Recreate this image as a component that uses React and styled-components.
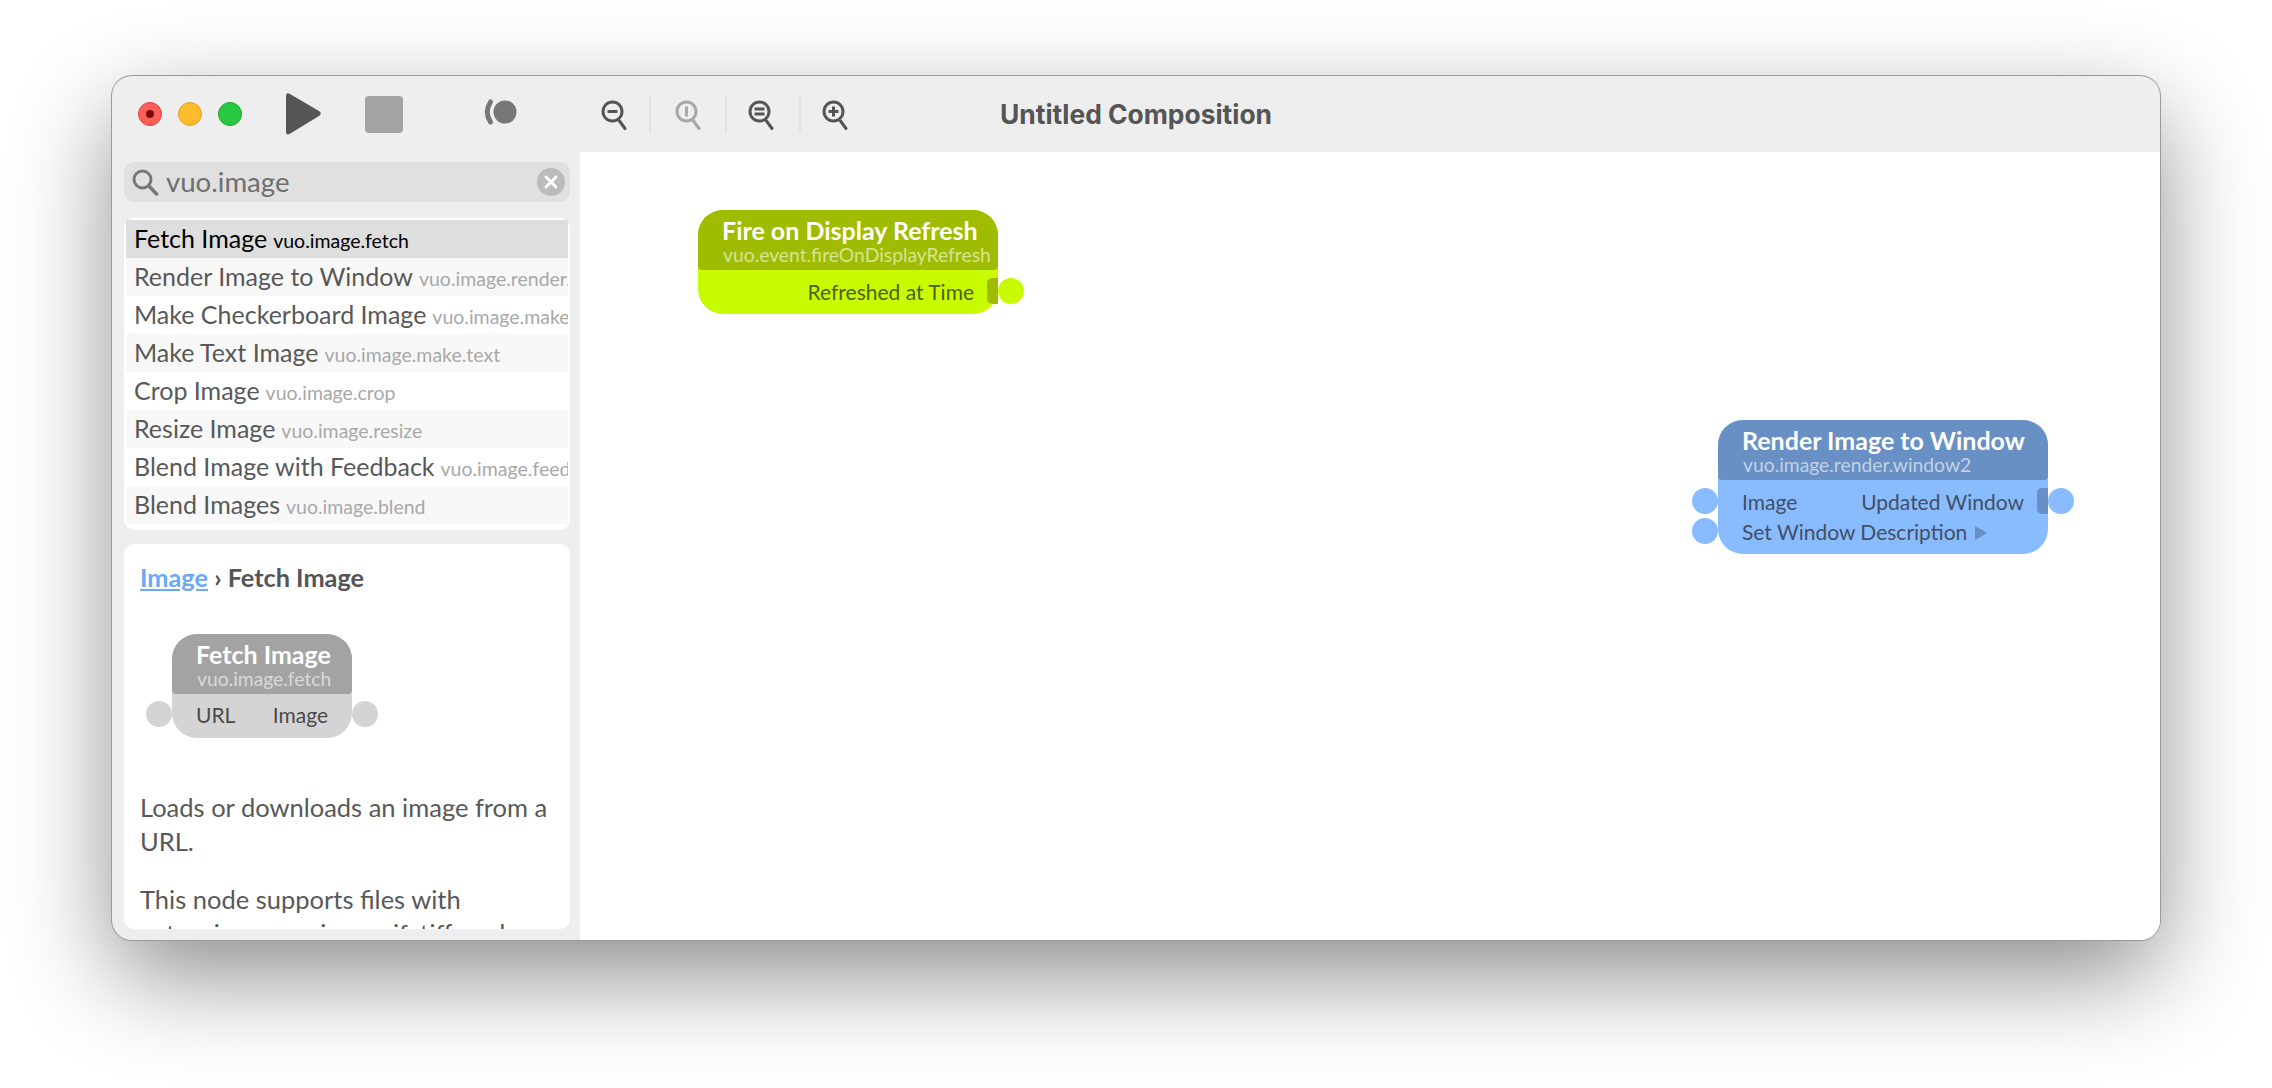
import styled, { createGlobalStyle } from "styled-components";

const GlobalStyle = createGlobalStyle`
  html, body { margin: 0; background: #fff; overflow: hidden; }
  body { font-family: "Lato", "Noto Sans", sans-serif; }
`;

const Page = styled.div`
  width: 2272px;
  height: 1088px;
  padding: 75px 0 0 111px;
  box-sizing: border-box;
  overflow: hidden;
`;

const Win = styled.div`
  width: 2050px;
  height: 866px;
  box-sizing: border-box;
  border: 1px solid rgba(0, 0, 0, 0.35);
  border-radius: 21px;
  background: #eeeeee;
  box-shadow: 0 36px 100px -4px rgba(0, 0, 0, 0.47);
  overflow: hidden;
  display: flex;
  flex-direction: column;
`;

const Toolbar = styled.div`
  height: 76px;
  flex: none;
  display: flex;
  align-items: center;
  position: relative;
  padding-left: 26px;
`;

const Lights = styled.div`
  display: flex;
  gap: 16px;
`;

const Light = styled.div`
  width: 24px;
  height: 24px;
  border-radius: 50%;
  box-sizing: border-box;
  background: ${(p) => p.$color};
  border: 1px solid ${(p) => p.$edge};
  display: flex;
  align-items: center;
  justify-content: center;
  &::after {
    content: "";
    width: 8px;
    height: 8px;
    border-radius: 50%;
    background: ${(p) => p.$dot || "transparent"};
  }
`;

const PlayIcon = styled.svg`
  margin-left: 42px;
  width: 38px;
  height: 44px;
  flex: none;
`;

const StopBtn = styled.div`
  margin-left: 43px;
  width: 38px;
  height: 37px;
  border-radius: 4px;
  background: #a3a3a3;
  flex: none;
`;

const ActivityIcon = styled.svg`
  margin-left: 81px;
  width: 33px;
  height: 26px;
  flex: none;
  margin-top: -4px;
`;

const ZoomGroup = styled.div`
  margin-left: 62px;
  display: flex;
  align-items: center;
`;

const ZoomBtn = styled.div`
  width: ${(p) => p.$w}px;
  height: 38px;
  display: flex;
  align-items: center;
  justify-content: center;
  border-right: ${(p) => (p.$sep ? "2px solid #e2e2e2" : "none")};
  box-sizing: border-box;
  padding-right: ${(p) => p.$nudge || 0}px;
`;

const Title = styled.div`
  margin-left: 131px;
  font-family: "Inter", sans-serif;
  font-size: 26.4px;
  font-weight: 700;
  color: #555;
  white-space: nowrap;
`;

const Body = styled.div`
  flex: 1;
  display: flex;
  min-height: 0;
`;

const Sidebar = styled.div`
  width: 468px;
  flex: none;
  box-sizing: border-box;
  padding: 10px 10px 11px 12px;
  display: flex;
  flex-direction: column;
`;

const Search = styled.div`
  height: 40px;
  flex: none;
  border-radius: 10px;
  background: #e0e0e0;
  display: flex;
  align-items: center;
  padding: 0 5px 0 7px;
`;

const SearchText = styled.div`
  margin-left: 7px;
  flex: 1;
  font-size: 27.6px;
  line-height: 36px;
  color: #6f6f6f;
`;

const ListPanel = styled.div`
  margin-top: 16px;
  height: 312px;
  flex: none;
  box-sizing: border-box;
  padding: 2px 2px 6px;
  background: #fff;
  border-radius: 10px;
`;

const Row = styled.div`
  height: 38px;
  padding-left: 8px;
  display: flex;
  align-items: baseline;
  gap: 6px;
  line-height: 36px;
  white-space: nowrap;
  overflow: hidden;
  background: ${(p) => (p.$selected ? "#dedede" : p.$odd ? "#f8f8f8" : "#fff")};
  color: ${(p) => (p.$selected ? "#000" : "#585858")};
`;

const RowName = styled.span`
  font-size: 25px;
`;

const RowId = styled.span`
  font-size: 19.5px;
  color: ${(p) => (p.$selected ? "#000" : "#a8a8a8")};
`;

const DetailPanel = styled.div`
  margin-top: 14px;
  flex: 1;
  min-height: 0;
  overflow: hidden;
  background: #fff;
  border-radius: 10px;
  padding: 17px 16px 0;
`;

const Crumbs = styled.div`
  font-size: 25.3px;
  font-weight: 700;
  color: #555;
  line-height: 32px;
`;

const CrumbLink = styled.span`
  color: #6aa9f4;
  text-decoration: underline;
`;

const Preview = styled.div`
  margin-top: 41px;
  margin-left: 32px;
  margin-bottom: 52px;
`;

const Para = styled.p`
  margin: 0 0 24px;
  font-size: 25.5px;
  line-height: 34px;
  color: #585858;
`;

const Canvas = styled.div`
  flex: 1;
  background: #fff;
  position: relative;
  overflow: hidden;
`;

const NodeBox = styled.div`
  position: ${(p) => (p.$x === undefined ? "relative" : "absolute")};
  left: ${(p) => p.$x}px;
  top: ${(p) => p.$y}px;
  width: ${(p) => p.$w}px;
  background: ${(p) => p.$body};
  color: ${(p) => p.$ink};
  border-radius: 25px;
  padding-bottom: ${(p) => p.$pad}px;
`;

const NodeHead = styled.div`
  height: 60px;
  box-sizing: border-box;
  background: ${(p) => p.$head};
  border-radius: 25px 25px 4px 4px;
  padding: 5px 0 0 24px;
  white-space: nowrap;
`;

const NodeTitle = styled.div`
  font-size: 25px;
  font-weight: 700;
  color: #fff;
  line-height: 30px;
`;

const NodeId = styled.div`
  font-size: 19.3px;
  color: rgba(255, 255, 255, 0.6);
  line-height: 20px;
  margin-left: 1px;
`;

const PortRow = styled.div`
  position: relative;
  height: 30px;
  margin-top: ${(p) => p.$top || 0}px;
  padding: 0 24px;
  display: flex;
  align-items: center;
  justify-content: space-between;
  font-size: 21px;
  white-space: nowrap;
`;

const PortDot = styled.div`
  position: absolute;
  top: 2px;
  width: 26px;
  height: 26px;
  border-radius: 50%;
  background: ${(p) => p.$body};
  ${(p) => (p.$side === "left" ? "left: -26px;" : "right: -26px;")}
`;

const PortPill = styled.div`
  position: absolute;
  right: 0;
  top: 2px;
  width: 11px;
  height: 26px;
  border-radius: 5px 0 0 5px;
  background: ${(p) => p.$head};
`;

const MoreArrow = styled.span`
  display: inline-block;
  margin-left: 8px;
  border-left: 12px solid ${(p) => p.$head};
  border-top: 7px solid transparent;
  border-bottom: 7px solid transparent;
`;

const Glass = ({ color = "#555", children }) => (
  <svg width="28" height="32" viewBox="0 0 28 32" fill="none">
    <circle cx="12.5" cy="13.5" r="9.5" stroke={color} strokeWidth="3" />
    <path d="M19.5 23 L25 30.5" stroke={color} strokeWidth="3" strokeLinecap="round" />
    {children}
  </svg>
);

const nodeRows = [
  ["Fetch Image", "vuo.image.fetch"],
  ["Render Image to Window", "vuo.image.render.window2"],
  ["Make Checkerboard Image", "vuo.image.make.checkerboard"],
  ["Make Text Image", "vuo.image.make.text"],
  ["Crop Image", "vuo.image.crop"],
  ["Resize Image", "vuo.image.resize"],
  ["Blend Image with Feedback", "vuo.image.feedback"],
  ["Blend Images", "vuo.image.blend"],
];

const grey = { $head: "#a3a3a3", $body: "#d4d4d4", $ink: "#4a4a4a" };
const lime = { $head: "#9fbc00", $body: "#c9fb00", $ink: "#4f5f10" };
const blue = { $head: "#6890c4", $body: "#88bbff", $ink: "#434f63" };

const App = () => {
  return (
    <Page>
      <GlobalStyle />
      <Win>
        <Toolbar>
          <Lights>
            <Light $color="#ff5f57" $edge="#e0443e" $dot="#7a0a05" />
            <Light $color="#febc2e" $edge="#dea123" />
            <Light $color="#28c840" $edge="#1aab29" />
          </Lights>
          <PlayIcon viewBox="0 0 38 44">
            <path
              d="M2 4 Q2 0 5.5 1.8 L35 19 Q38.5 21.5 35 24 L5.5 42 Q2 43.5 2 40 Z"
              fill="#555"
            />
          </PlayIcon>
          <StopBtn />
          <ActivityIcon viewBox="0 0 33 26">
            <circle cx="21" cy="13" r="11.5" fill="#777" />
            <path d="M6.5 3 Q0 13 6.5 23" stroke="#777" strokeWidth="5" fill="none" strokeLinecap="round" />
          </ActivityIcon>
          <ZoomGroup>
            <ZoomBtn $w={72} $sep>
              <Glass>
                <path d="M7.5 13.5 H17.5" stroke="#555" strokeWidth="3" />
              </Glass>
            </ZoomBtn>
            <ZoomBtn $w={76} $sep>
              <Glass color="#a8a8a8">
                <path d="M12.5 8.5 V18.5" stroke="#a8a8a8" strokeWidth="3" />
              </Glass>
            </ZoomBtn>
            <ZoomBtn $w={74} $sep $nudge={4}>
              <Glass>
                <path d="M7.5 11 H17.5 M7.5 16 H17.5" stroke="#555" strokeWidth="3" />
              </Glass>
            </ZoomBtn>
            <ZoomBtn $w={68}>
              <Glass>
                <path d="M7.5 13.5 H17.5 M12.5 8.5 V18.5" stroke="#555" strokeWidth="3" />
              </Glass>
            </ZoomBtn>
          </ZoomGroup>
          <Title>Untitled Composition</Title>
        </Toolbar>
        <Body>
          <Sidebar>
            <Search>
              <svg width="28" height="28" viewBox="0 0 28 28" fill="none">
                <circle cx="11.5" cy="11.5" r="8.5" stroke="#777" strokeWidth="3" />
                <path d="M18 18 L25.5 26" stroke="#777" strokeWidth="3.5" strokeLinecap="round" />
              </svg>
              <SearchText>vuo.image</SearchText>
              <svg width="28" height="28" viewBox="0 0 28 28">
                <circle cx="14" cy="14" r="14" fill="#bbb" />
                <path d="M9 9 L19 19 M19 9 L9 19" stroke="#fff" strokeWidth="3" strokeLinecap="round" />
              </svg>
            </Search>
            <ListPanel>
              {nodeRows.map(([name, id], i) => (
                <Row key={id} $selected={i === 0} $odd={i % 2 === 1}>
                  <RowName>{name}</RowName>
                  <RowId $selected={i === 0}>{id}</RowId>
                </Row>
              ))}
            </ListPanel>
            <DetailPanel>
              <Crumbs>
                <CrumbLink>Image</CrumbLink> › Fetch Image
              </Crumbs>
              <Preview>
                <NodeBox {...grey} $w={180} $pad={9}>
                  <NodeHead $head={grey.$head}>
                    <NodeTitle>Fetch Image</NodeTitle>
                    <NodeId>vuo.image.fetch</NodeId>
                  </NodeHead>
                  <PortRow $top={5}>
                    <PortDot $side="left" $body={grey.$body} />
                    <span>URL</span>
                    <span>Image</span>
                    <PortDot $side="right" $body={grey.$body} />
                  </PortRow>
                </NodeBox>
              </Preview>
              <Para>Loads or downloads an image from a URL.</Para>
              <Para>This node supports files with extensions png, jpeg, gif, tiff, and more.</Para>
            </DetailPanel>
          </Sidebar>
          <Canvas>
            <NodeBox {...lime} $x={118} $y={58} $w={300} $pad={8}>
              <NodeHead $head={lime.$head}>
                <NodeTitle>Fire on Display Refresh</NodeTitle>
                <NodeId>vuo.event.fireOnDisplayRefresh</NodeId>
              </NodeHead>
              <PortRow $top={6}>
                <span />
                <span>Refreshed at Time</span>
                <PortPill $head={lime.$head} />
                <PortDot $side="right" $body={lime.$body} />
              </PortRow>
            </NodeBox>
            <NodeBox {...blue} $x={1138} $y={268} $w={330} $pad={8}>
              <NodeHead $head={blue.$head}>
                <NodeTitle>Render Image to Window</NodeTitle>
                <NodeId>vuo.image.render.window2</NodeId>
              </NodeHead>
              <PortRow $top={6}>
                <PortDot $side="left" $body={blue.$body} />
                <span>Image</span>
                <span>Updated Window</span>
                <PortPill $head={blue.$head} />
                <PortDot $side="right" $body={blue.$body} />
              </PortRow>
              <PortRow>
                <PortDot $side="left" $body={blue.$body} />
                <span>
                  Set Window Description
                  <MoreArrow $head={blue.$head} />
                </span>
              </PortRow>
            </NodeBox>
          </Canvas>
        </Body>
      </Win>
    </Page>
  );
};

export default App;
